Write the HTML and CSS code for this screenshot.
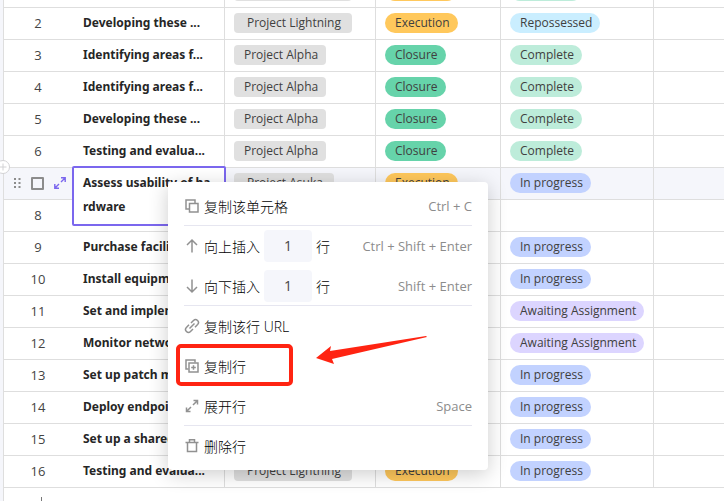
FILE: index.html
```html
<!DOCTYPE html>
<html lang="zh-CN">

<head>
    <meta charset="UTF-8">
    <meta name="viewport" content="width=device-width, initial-scale=1.0">
    <title>Projects</title>
    <link rel="stylesheet" href="styles.css">
</head>

<body>
    <main class="sheet">
        <table class="grid">
            <colgroup>
                <col class="col-num">
                <col class="col-name">
                <col class="col-project">
                <col class="col-phase">
                <col class="col-status">
                <col>
            </colgroup>
            <tbody>
                <tr class="hidden-row"><td class="num"></td><td class="name"></td><td><span class="tag"></span></td><td><span class="pill yellow"></span></td><td><span class="pill mint"></span></td><td></td></tr>
                <tr><td class="num">2</td><td class="name">Developing these ...</td><td><span class="tag wide">Project Lightning</span></td><td><span class="pill yellow">Execution</span></td><td><span class="pill sky">Repossessed</span></td><td></td></tr>
                <tr><td class="num">3</td><td class="name">Identifying areas f...</td><td><span class="tag">Project Alpha</span></td><td><span class="pill green">Closure</span></td><td><span class="pill mint">Complete</span></td><td></td></tr>
                <tr><td class="num">4</td><td class="name">Identifying areas f...</td><td><span class="tag">Project Alpha</span></td><td><span class="pill green">Closure</span></td><td><span class="pill mint">Complete</span></td><td></td></tr>
                <tr><td class="num">5</td><td class="name">Developing these ...</td><td><span class="tag">Project Alpha</span></td><td><span class="pill green">Closure</span></td><td><span class="pill mint">Complete</span></td><td></td></tr>
                <tr><td class="num">6</td><td class="name">Testing and evalua...</td><td><span class="tag">Project Alpha</span></td><td><span class="pill green">Closure</span></td><td><span class="pill mint">Complete</span></td><td></td></tr>
                <tr class="active">
                    <td class="num">
                        <button class="add-here" aria-label="插入行">
                            <svg width="14" height="14" viewBox="0 0 14 14" fill="none" stroke="#d2d2d4"><circle cx="7" cy="7" r="6.5" fill="#fff"/><path d="M7 3.5v7M3.5 7h7"/></svg>
                        </button>
                        <div class="row-tools">
                            <svg width="7" height="12" viewBox="0 0 7 12" fill="#8c8c8c"><path d="M0 1h2v2H0zM4.500 1h2v2h-2zM0 5h2v2H0zM4.500 5h2v2h-2zM0 9h2v2H0zM4.500 9h2v2h-2z"/></svg>
                            <input type="checkbox" aria-label="选择行">
                            <svg width="12" height="12" viewBox="0 0 12 12" fill="none" stroke="#7b67ee" stroke-width="1.4"><path d="M7 .8h4.2V5M11 1L7 5M.8 7v4.2H5M1 11l4-4"/></svg>
                        </div>
                    </td>
                    <td class="name"><div class="editor">Assess usability of ha<br>rdware</div></td>
                    <td><span class="tag wide">Project Asuka</span></td>
                    <td><span class="pill yellow">Execution</span></td>
                    <td><span class="pill blue">In progress</span></td>
                    <td></td>
                </tr>
                <tr><td class="num">8</td><td class="name"></td><td></td><td></td><td></td><td></td></tr>
                <tr><td class="num">9</td><td class="name">Purchase facilit...</td><td></td><td></td><td><span class="pill blue">In progress</span></td><td></td></tr>
                <tr><td class="num">10</td><td class="name">Install equipment...</td><td></td><td></td><td><span class="pill blue">In progress</span></td><td></td></tr>
                <tr><td class="num">11</td><td class="name">Set and implem...</td><td></td><td></td><td><span class="pill violet">Awaiting Assignment</span></td><td></td></tr>
                <tr><td class="num">12</td><td class="name">Monitor networ...</td><td></td><td></td><td><span class="pill violet">Awaiting Assignment</span></td><td></td></tr>
                <tr><td class="num">13</td><td class="name">Set up patch m...</td><td></td><td></td><td><span class="pill blue">In progress</span></td><td></td></tr>
                <tr><td class="num">14</td><td class="name">Deploy endpoint...</td><td></td><td></td><td><span class="pill blue">In progress</span></td><td></td></tr>
                <tr><td class="num">15</td><td class="name">Set up a shared...</td><td></td><td></td><td><span class="pill blue">In progress</span></td><td></td></tr>
                <tr><td class="num">16</td><td class="name">Testing and evalua...</td><td><span class="tag wide">Project Lightning</span></td><td><span class="pill yellow">Execution</span></td><td><span class="pill blue">In progress</span></td><td></td></tr>
            </tbody>
        </table>
        <button class="add-row" aria-label="新增行">
            <svg width="14" height="14" viewBox="0 0 14 14" fill="none" stroke="#777"><path d="M7.5 1v12M1 7.5h13"/></svg>
        </button>
    </main>

    <div class="menu">
        <button class="item line">
            <svg class="icon" viewBox="0 0 16 16"><path d="M5.500 5.500h8.500v8.500H5.500z"/><path d="M11 5V2H2v9h3"/></svg>
            复制该单元格<kbd>Ctrl + C</kbd>
        </button>
        <div class="item">
            <svg class="icon" viewBox="0 0 16 16"><path d="M8 14.500V2M3 7l5-5 5 5"/></svg>
            <label for="above">向上插入</label><input id="above" type="text" value="1"><span>行</span><kbd>Ctrl + Shift + Enter</kbd>
        </div>
        <div class="item line">
            <svg class="icon" viewBox="0 0 16 16"><path d="M8 1.500V14M3 9l5 5 5-5"/></svg>
            <label for="below">向下插入</label><input id="below" type="text" value="1"><span>行</span><kbd>Shift + Enter</kbd>
        </div>
        <button class="item">
            <svg class="icon" viewBox="0 0 16 16"><path d="M5.500 10.500l5-5M7 5l2.500-2.500a2.900 2.900 0 0 1 4.100 4.100L11 9.200M9 11l-2.500 2.500a2.900 2.900 0 0 1-4.100-4.100L5 6.800"/></svg>
            复制该行 URL
        </button>
        <button class="item">
            <svg class="icon" viewBox="0 0 16 16"><path d="M5 5h9v9H5zM9.500 7.200v4.600M7.200 9.500h4.600"/><path d="M11 4.500V2H2v9h2.500"/></svg>
            复制行
        </button>
        <button class="item line">
            <svg class="icon" viewBox="0 0 16 16"><path d="M9.500 2.500h4v4M13.300 2.700L9 7M2.500 9.500v4h4M2.700 13.300L7 9"/></svg>
            展开行<kbd>Space</kbd>
        </button>
        <button class="item">
            <svg class="icon" viewBox="0 0 16 16"><path d="M1.500 4.500h13M3.500 4.500v9h9v-9M5.500 4V1.800h5V4"/></svg>
            删除行
        </button>

        <div class="mark"></div>
        <svg class="arrow" width="112" height="30" viewBox="0 0 112 30" fill="#ff2412"><path d="M0 23L15 11l-1 5L110 1l1 1L16 24l2 5z"/></svg>
    </div>
</body>

</html>
```

FILE: styles.css
```css
* {
    margin: 0;
    padding: 0;
    box-sizing: border-box;
}

body {
    height: 100vh;
    overflow: hidden;
    background-color: #f5f6fb;
    padding-left: 3px;
    font-family: "Open Sans", "Noto Sans CJK SC", sans-serif;
    font-size: 12px;
    color: #262626;
}

button {
    border: none;
    background: none;
    font: inherit;
    color: inherit;
    cursor: pointer;
}

.sheet {
    min-height: 100vh;
    background-color: #fff;
    border-left: 1px solid #dedede;
}

/* the list is scrolled, so the first row is partly out of view */
.grid {
    width: 100%;
    margin-top: -24px;
    table-layout: fixed;
    border-collapse: separate;
    border-spacing: 0;
}

.col-num {
    width: 68px;
}

.col-name,
.col-status {
    width: 153px;
}

.col-project {
    width: 151px;
}

.col-phase {
    width: 125px;
}

.grid td {
    height: 32px;
    padding: 5px 0 0 9px;
    border-right: 1px solid #dedede;
    border-bottom: 1px solid #dedede;
    vertical-align: top;
    white-space: nowrap;
    line-height: 20px;
}

.grid td:last-child {
    border-right: none;
}

.grid .num {
    position: relative;
    padding-left: 0;
    border-right: none;
    text-align: center;
    font-size: 13px;
    color: #444;
}

.grid .name {
    position: relative;
    padding-left: 11px;
    font-family: "Noto Sans", sans-serif;
    font-weight: 700;
}

.grid .active td {
    background-color: #f5f6fb;
}

.tag,
.pill {
    display: block;
    width: fit-content;
    height: 20px;
    padding: 0 8px 0 10px;
    line-height: 19px;
    color: #404040;
}

.tag {
    border-radius: 4px;
    background-color: #e0e0e0;
}

.wide {
    padding: 0 11px 0 13px;
}

.pill {
    border-radius: 10px;
}

.hidden-row .tag {
    width: 118px;
}

.hidden-row .pill {
    width: 72px;
}

.yellow {
    background-color: #ffc85c;
}

.green {
    background-color: #66d3aa;
}

.mint {
    background-color: #bdecda;
}

.sky {
    background-color: #caeeff;
}

.blue {
    background-color: #c2d2ff;
}

.violet {
    background-color: #dcd5ff;
}

.row-tools {
    display: flex;
    align-items: center;
    gap: 10px;
    height: 20px;
    padding-left: 10px;
}

.row-tools input {
    appearance: none;
    width: 13px;
    height: 13px;
    border: 2px solid #8c8c8c;
    border-radius: 1px;
}

.add-here {
    position: absolute;
    left: -8px;
    top: -9px;
    height: 14px;
}

.editor {
    position: absolute;
    z-index: 1;
    left: 0;
    top: -2px;
    width: 154px;
    height: 60px;
    padding: 3px 9px;
    border: 2px solid #7b67ee;
    border-radius: 2px;
    background-color: #fff;
    line-height: 24px;
}

.add-row {
    display: block;
    padding: 8px 30px;
}

.menu {
    position: absolute;
    z-index: 2;
    left: 168px;
    top: 182px;
    width: 320px;
    padding: 4px 16px;
    border-radius: 4px;
    background-color: #fff;
    box-shadow: 0 4px 20px rgba(0, 0, 0, 0.2);
}

.item {
    display: flex;
    align-items: center;
    gap: 4px;
    width: 100%;
    height: 40px;
    border-bottom: 1px solid transparent;
    font-size: 14px;
    font-weight: 300;
    color: #000;
}

.item.line {
    border-bottom-color: #e6e6f0;
}

.item input {
    width: 48px;
    height: 32px;
    border: none;
    border-radius: 4px;
    background-color: #f5f6fb;
    text-align: center;
    font: inherit;
    font-weight: 400;
    color: #444;
}

.item kbd {
    margin-left: auto;
    font-family: inherit;
    font-size: 13px;
    font-weight: 400;
    color: #8c8c8c;
}

.icon {
    width: 16px;
    height: 16px;
    fill: none;
    stroke: #919191;
    stroke-width: 1.5;
}

.mark {
    position: absolute;
    left: 8px;
    top: 162px;
    width: 117px;
    height: 42px;
    border: 4px solid #ff2412;
    border-radius: 5px;
    pointer-events: none;
}

.arrow {
    position: absolute;
    left: 148px;
    top: 153px;
    pointer-events: none;
}
```
